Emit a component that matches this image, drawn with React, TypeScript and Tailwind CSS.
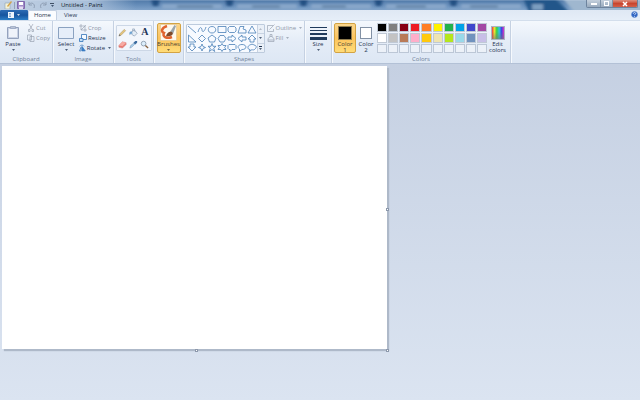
import type { ReactNode } from "react";
import clsx from "clsx";

const palette = [
  { name: "Black", color: "#000000" },
  { name: "Gray", color: "#7f7f7f" },
  { name: "Dark red", color: "#880015" },
  { name: "Red", color: "#ed1c24" },
  { name: "Orange", color: "#ff7f27" },
  { name: "Yellow", color: "#fff200" },
  { name: "Green", color: "#22b14c" },
  { name: "Turquoise", color: "#00a2e8" },
  { name: "Indigo", color: "#3f48cc" },
  { name: "Purple", color: "#a349a4" },
  { name: "White", color: "#ffffff" },
  { name: "Light gray", color: "#c3c3c3" },
  { name: "Brown", color: "#b97a57" },
  { name: "Rose", color: "#ffaec9" },
  { name: "Gold", color: "#ffc90e" },
  { name: "Light yellow", color: "#efe4b0" },
  { name: "Lime", color: "#b5e61d" },
  { name: "Light turquoise", color: "#99d9ea" },
  { name: "Blue gray", color: "#7092be" },
  { name: "Lavender", color: "#c8bfe7" },
];

const shapes = [
  { name: "Line", d: "M1 1 9 8" },
  { name: "Curve", d: "M1 7C3 0 5 3 5 5s2 3 4-3" },
  { name: "Oval", d: "M5 1.5c5 0 5 6.5 0 6.5s-5-6.5 0-6.5z" },
  { name: "Rectangle", d: "M1 1.5h8v6H1z" },
  { name: "Rounded rectangle", d: "M2.5 1.5h5L9 3v3L7.5 7.5h-5L1 6V3z" },
  { name: "Polygon", d: "M3 1.5h4L6 4l3 1v3H1z" },
  { name: "Triangle", d: "M5 1 9 8H1z" },
  { name: "Right triangle", d: "M1.5 1v7H9z" },
  { name: "Diamond", d: "M5 1l3.5 3.5L5 8 1.5 4.5z" },
  { name: "Pentagon", d: "M5 1l4 3-1.5 4h-5L1 4z" },
  { name: "Hexagon", d: "M3 1.5h4L9 4.5 7 8H3L1 4.5z" },
  { name: "Right arrow", d: "M1 3h4V1l4 3.5L5 8V6H1z" },
  { name: "Left arrow", d: "M9 3H5V1L1 4.5 5 8V6h4z" },
  { name: "Up arrow", d: "M3 8V5H1l4-4 4 4H7v3z" },
  { name: "Down arrow", d: "M3 1v3H1l4 4 4-4H7V1z" },
  { name: "Four-point star", d: "M5 1l1 2.5 2.5 1L6 5.5 5 8 4 5.5 1.5 4.5 4 3.5z" },
  { name: "Five-point star", d: "M5 .5l1 2.8h3L6.7 5.2 7.7 8.5 5 6.5 2.3 8.5l1-3.3L1 3.3h3z" },
  { name: "Six-point star", d: "M5 .5l1.2 2H9l-1.3 2L9 6.5H6.2L5 8.5l-1.200-2H1l1.300-2L1 2.500h2.800z" },
  { name: "Rounded callout", d: "M2 1.5h6l1 1v3l-1 1H5L3 8.5v-2H2l-1-1v-3z" },
  { name: "Oval callout", d: "M5 1.5c5.5 0 5 5.3 0 5L2.5 8.5V6C-.5 4 1.5 1.5 5 1.5z" },
  { name: "Cloud callout", d: "M3 2c1-1 3-1 4 0 2 0 3 2 1.5 3.5C7 7.5 5.5 7 5 6.5L2.5 8.5 3 6.5C0 6.5.5 2.5 3 2z" },
];

function Caret({ className }: { className?: string }) {
  return (
    <svg viewBox="0 0 4 2" className={clsx("h-[2px] w-[3px] shrink-0", className)} aria-hidden>
      <path d="M0 0h4L2 2z" fill="currentColor" />
    </svg>
  );
}

function Group({ label, className, children }: { label?: string; className: string; children: ReactNode }) {
  return (
    <section
      aria-label={label}
      className={clsx("flex shrink-0 flex-col border-r border-[#c5d1e2] pt-[2px] shadow-[1px_0_0_#f6f9fd]", className)}
    >
      <div className="flex h-[31px] justify-center">{children}</div>
      {label && <h2 className="mt-[2px] text-center leading-[8px] text-[#6f7f98]">{label}</h2>}
    </section>
  );
}

type BigButtonProps = { icon: ReactNode; label: string; menu?: boolean; active?: boolean; className?: string };

function BigButton({ icon, label, menu, active, className }: BigButtonProps) {
  return (
    <button
      type="button"
      className={clsx(
        "flex h-[30px] shrink-0 flex-col items-center rounded-[2px] border",
        active
          ? "border-[#d3a343] bg-linear-to-b from-[#fbd68c] via-[#fcc35c] to-[#ffdc78] text-[#4a4030]"
          : "border-transparent",
        className,
      )}
    >
      <span className="flex h-[17px] shrink-0 items-center">{icon}</span>
      <span className="w-min text-center leading-[6px]">{label}</span>
      {menu && <Caret className="mt-[2px]" />}
    </button>
  );
}

type SmallButtonProps = { icon: ReactNode; label: string; menu?: boolean; disabled?: boolean };

function SmallButton({ icon, label, menu, disabled }: SmallButtonProps) {
  return (
    <button
      type="button"
      disabled={disabled}
      className={clsx("flex h-[10px] items-center gap-[1px] leading-[10px]", disabled && "text-[#8e98a8]")}
    >
      <svg viewBox="0 0 8 8" className="size-[8px]" fill="none" stroke="currentColor" strokeWidth=".6" aria-hidden>
        {icon}
      </svg>
      {label}
      {menu && <Caret className="ml-[2px]" />}
    </button>
  );
}

function ToolButton({ name, children }: { name: string; children: ReactNode }) {
  return (
    <button type="button" aria-label={name} className="flex h-[12px] items-center justify-center">
      <svg viewBox="0 0 10 10" className="size-[9px]" fill="none" aria-hidden>
        {children}
      </svg>
    </button>
  );
}

function TitleBar() {
  return (
    <header className="relative flex h-[10px] items-center overflow-hidden bg-[#7398c1]">
      {/* Glass frame with the desktop showing through */}
      <svg viewBox="0 0 640 10" preserveAspectRatio="none" className="absolute inset-0 h-full w-full" aria-hidden>
        <defs>
          <linearGradient id="glass" x2="0" y2="1">
            <stop offset="0" stopColor="#4f79a8" />
            <stop offset=".4" stopColor="#6189b6" />
            <stop offset="1" stopColor="#7fa2c9" />
          </linearGradient>
          <linearGradient id="glow">
            <stop offset="0" stopColor="#c3d2e4" />
            <stop offset=".65" stopColor="#a9bfd9" />
            <stop offset="1" stopColor="#a9bfd9" stopOpacity="0" />
          </linearGradient>
          <filter id="soft" x="-5%" y="-50%" width="110%" height="200%">
            <feGaussianBlur stdDeviation="1.5 .8" />
          </filter>
        </defs>
        <path d="M0 0h640v10H0z" fill="url(#glass)" />
        <path d="M0 0h136v10H0z" fill="url(#glow)" />
        <g filter="url(#soft)">
          <path d="M151-1h9l-2 7h-5zM225-1h9l-2 7h-5zM299-1h9l-2 7h-5zM374-1h9l-2 7h-5zM449-1h9l-2 7h-5z" fill="#234f82" />
          <path d="M162 4h60v5h-60zM237 4h60v5h-60zM311 4h60v5h-60zM386 4h60v5h-60zM461 4h60v5h-60z" fill="#87a6c9" />
          <path d="M177 5h36v3h-36zM252 5h28v3h-28zM322 5h24v3h-24zM396 5h30v3h-30zM470 5h28v3h-28z" fill="#6b8bae" />
          <path d="M562-2h80v14h-68z" fill="#9fb7cf" />
          <path d="M523-2h32l14 14h-40z" fill="#24568a" />
          <path d="M532 4h11v6h-11z" fill="#7b9dc0" />
        </g>
        <path d="M0 .5h640" stroke="#dce8f5" strokeOpacity=".2" />
      </svg>

      <div className="relative flex items-center pl-[4px]">
        <svg viewBox="0 0 8 8" className="size-[8px]" aria-hidden>
          <path d="M1 2h5v6H1z" fill="#f5f2d8" stroke="#8ba1b7" strokeWidth=".6" />
          <path d="M3 5 7 0l1 1-4 5z" fill="#d4a348" />
        </svg>
        <span className="ml-[2px] h-[7px] w-px bg-[#93a3b8]" />
        <button type="button" aria-label="Save" className="ml-[2px]">
          <svg viewBox="0 0 8 8" className="size-[8px]" aria-hidden>
            <path d="M.5.5h7v7h-7z" fill="#a18bc8" stroke="#8069ad" />
            <path d="M2 1h4v3H2z" fill="#fff" />
            <path d="M2 5.5h4V8H2z" fill="#e3daf2" />
          </svg>
        </button>
        <button type="button" aria-label="Undo" className="ml-[3px]">
          <svg viewBox="0 0 8 8" className="size-[8px]" fill="none" stroke="#8f9fb5" aria-hidden>
            <path d="M1 1v3h3M1 4c2-4 7-1 5 3" />
          </svg>
        </button>
        <button type="button" aria-label="Redo" className="ml-[3px]">
          <svg viewBox="0 0 8 8" className="size-[8px]" fill="none" stroke="#8f9fb5" aria-hidden>
            <path d="M7 1v3H4M7 4C5 0 0 3 2 7" />
          </svg>
        </button>
        <button type="button" aria-label="Customize Quick Access Toolbar" className="ml-[3px] flex w-[4px] flex-col items-center gap-[1px]">
          <span className="h-px w-full bg-[#3f4f65]" />
          <Caret />
        </button>
      </div>
      <h1 className="relative ml-[7px] leading-[10px] text-[#111c2b]">Untitled - Paint</h1>

      <div className="relative mr-[2px] ml-auto flex h-[8px] self-start overflow-hidden rounded-b-[2px] border border-t-0 border-[#6d839d]">
        <button type="button" aria-label="Minimize" className="flex w-[13px] items-center justify-center bg-linear-to-b from-[#c5d0dd] to-[#98aabd]">
          <span className="h-[2px] w-[6px] bg-white" />
        </button>
        <button type="button" aria-label="Maximize" className="flex w-[13px] items-center justify-center border-x border-[#7f93a9] bg-linear-to-b from-[#c5d0dd] to-[#98aabd]">
          <span className="size-[5px] border border-white" />
        </button>
        <button type="button" aria-label="Close" className="flex w-[24px] items-center justify-center bg-linear-to-b from-[#dc8f7e] via-[#c9452e] to-[#d3604a]">
          <svg viewBox="0 0 6 6" className="size-[6px]" stroke="#fff" strokeWidth="1.5" aria-hidden>
            <path d="M1 1l4 4M5 1 1 5" />
          </svg>
        </button>
      </div>
    </header>
  );
}

function Tabs() {
  return (
    <nav className="flex h-[11px] items-end border-b border-[#d3deec] bg-linear-to-b from-[#dfe8f4] to-[#e6eef8]">
      <button
        type="button"
        aria-label="Paint menu"
        className="flex h-[10px] w-[28px] items-center justify-center gap-[3px] rounded-t-[1px] bg-linear-to-b from-[#2d6cb4] via-[#17559f] to-[#2d7fc8] text-white"
      >
        <svg viewBox="0 0 6 6" className="size-[6px]" aria-hidden>
          <path d="M0 0h6v6H0z" fill="#eef5fc" />
          <path d="M1 1.5h2M1 3h2M1 4.5h2" stroke="#4d83bd" strokeWidth=".7" />
        </svg>
        <Caret />
      </button>
      <button type="button" className="h-[10px] w-[29px] rounded-t-[2px] border border-b-0 border-[#c3d0e2] bg-[#fafcff] leading-[9px]">
        Home
      </button>
      <button type="button" className="h-[10px] w-[27px] leading-[10px]">
        View
      </button>
      <button type="button" aria-label="Help" className="mr-[2px] mb-[2px] ml-auto">
        <svg viewBox="0 0 7 7" className="size-[7px]" aria-hidden>
          <circle cx="3.5" cy="3.5" r="3" fill="#2b62c3" stroke="#6a93d5" strokeWidth=".6" />
          <path d="M2.3 2.7c0-1.6 2.5-1.5 2.3 0-.1.7-1.1.7-1.1 1.5M3.5 5v.7" fill="none" stroke="#fff" strokeWidth=".8" />
        </svg>
      </button>
    </nav>
  );
}

function Ribbon() {
  return (
    <div className="flex h-[43px] border-b border-[#b3c1d6] bg-linear-to-b from-[#f4f8fd] via-[#e4ecf7] to-[#dde7f4]">
      <Group label="Clipboard" className="w-[53px]">
        <BigButton
          menu
          label="Paste"
          className="w-[24px]"
          icon={
            <svg viewBox="0 0 14 15" className="h-[15px] w-[14px]" aria-hidden>
              <path d="M1.5 2.5h11v11h-11z" fill="#c9d2e4" stroke="#94a2bd" />
              <path d="M3 4h8v8H3z" fill="#eff3fa" />
              <path d="M4.5 1.5h5v2h-5z" fill="#b9c3d6" stroke="#94a2bd" strokeWidth=".7" />
            </svg>
          }
        />
        <div className="ml-[2px] flex w-[24px] flex-col">
          <SmallButton disabled label="Cut" icon={<path d="M2 0l3 5M6 0 3 5M1.5 5.5H3v2H1.500zM5 5.500h1.500v2H5z" />} />
          <SmallButton disabled label="Copy" icon={<path d="M.5 1h4v5h-4zM3 2.5h4v5H3z" />} />
        </div>
      </Group>

      <Group label="Image" className="w-[61px]">
        <BigButton
          menu
          label="Select"
          className="w-[22px]"
          icon={
            <svg viewBox="0 0 16 12" className="h-[12px] w-[16px]" aria-hidden>
              <path d="M.5.5h15v11H.5z" fill="#e6eef9" stroke="#8ba2c0" />
            </svg>
          }
        />
        <div className="ml-[2px] flex w-[32px] flex-col">
          <SmallButton disabled label="Crop" icon={<path d="M2 0v6h6M0 2h6v6M2 6l5-5" />} />
          <SmallButton
            label="Resize"
            icon={
              <g stroke="#3172b8" strokeWidth=".8">
                <path d="M2.5.5h5v5h-5z" fill="#f4faff" />
                <path d="M.5 4.5v3H4v-3z" fill="#c5def5" />
              </g>
            }
          />
          <SmallButton
            menu
            label="Rotate"
            icon={
              <g stroke="#3172b8" strokeWidth=".8">
                <path d="M3.5 2v5.5h4z" fill="#3d84cb" />
                <path d="M2.5 3v4.5h-2z" fill="#e3effb" />
                <path d="M1 2c1-2 4-2 5 0" />
              </g>
            }
          />
        </div>
      </Group>

      <Group label="Tools" className="w-[40px]">
        <div className="mt-[2px] grid h-[26px] w-[36px] grid-cols-3 content-between rounded-[1px] border border-[#ccd7e6] bg-[#f2f6fc]">
          <ToolButton name="Pencil">
            <path d="M1 9l1-2.5 5-5L8.5 3l-5 5z" fill="#e6c67c" stroke="#9c8a63" strokeWidth=".5" />
            <path d="M1 9l.7-2L3 8.300z" fill="#5c6575" />
          </ToolButton>
          <ToolButton name="Fill with color">
            <path d="M3 4l3-2 3 4-3 3-3-2z" fill="#e4edf6" stroke="#7d91aa" strokeWidth=".7" />
            <path d="M4 4V1h2v3" stroke="#7d91aa" strokeWidth=".6" />
            <path d="M3 4C0 4 0 6 1 8c1-2 1-2 3-2z" fill="#6fa3d2" />
          </ToolButton>
          <button type="button" aria-label="Text" className="h-[12px] font-['Liberation_Serif',serif] text-[10px] leading-[12px] font-bold text-[#1d3558]">
            A
          </button>
          <ToolButton name="Eraser">
            <path d="M1 6l4-4 4 1v2L5 9 1 8z" fill="#e8786f" stroke="#cf7e7a" strokeWidth=".5" />
            <path d="M1 6l4-4 4 1-4 4z" fill="#f7aaa2" />
          </ToolButton>
          <ToolButton name="Color picker">
            <path d="M1 9l1-3 4-3 1 1-4 4z" fill="#a9d1ee" stroke="#7593b3" strokeWidth=".6" />
            <path d="M5 3l2 2 2-2V1H7z" fill="#3a6a9e" />
          </ToolButton>
          <ToolButton name="Magnifier">
            <circle cx="4" cy="4" r="2.6" fill="#dceefc" stroke="#8c9dae" />
            <path d="M6 6l3 3" stroke="#86613e" strokeWidth="1.5" />
          </ToolButton>
        </div>
      </Group>

      <Group className="w-[30px]">
        <BigButton
          active
          menu
          label="Brushes"
          className="w-[24px]"
          icon={
            <svg viewBox="0 0 17 17" className="size-[17px]" aria-hidden>
              <path d="M.5.5h16v16H.5z" fill="#fdf8ee" stroke="#e0c187" strokeWidth=".6" />
              <path d="M7 2C1 4 1 8 4 9c-2 4 3 6 8 4" fill="none" stroke="#e0642f" strokeWidth="2.5" />
              <path d="M10 8l4.500-7 1.500 1-3 8z" fill="#9aa5ac" />
              <path d="M6 12c1-3 3-5 6-4 2 2 0 5-6 4z" fill="#7d492b" />
            </svg>
          }
        />
      </Group>

      <Group label="Shapes" className="w-[121px]">
        <div className="mt-[1px] flex h-[29px] w-[79px] rounded-[1px] border border-[#bdcbdd] bg-[#f7faff]">
          <div className="grid flex-1 grid-cols-7">
            {shapes.map((s) => (
              <button key={s.name} type="button" aria-label={s.name} className="flex h-[9px] justify-center">
                <svg viewBox="0 0 10 9" className="h-[9px] w-[10px]" fill="none" stroke="#4a80b8" strokeWidth=".8" aria-hidden>
                  <path d={s.d} />
                </svg>
              </button>
            ))}
          </div>
          <div className="flex w-[7px] flex-col divide-y divide-[#c8d3e2] border-l border-[#c8d3e2] bg-[#eaf0f8]">
            <button type="button" aria-label="Scroll shapes up" className="flex flex-1 items-center justify-center text-[#a3abb8]">
              <Caret className="rotate-180" />
            </button>
            <button type="button" aria-label="Scroll shapes down" className="flex flex-1 items-center justify-center">
              <Caret />
            </button>
            <button type="button" aria-label="All shapes" className="flex flex-1 flex-col items-center justify-center gap-[1px]">
              <span className="h-px w-[3px] bg-current" />
              <Caret />
            </button>
          </div>
        </div>
        <div className="ml-[2px] flex w-[36px] flex-col">
          <SmallButton disabled menu label="Outline" icon={<path d="M6 1.5H.5v6h6V5M2.5 5.5l5-5" />} />
          <SmallButton disabled menu label="Fill" icon={<path d="M1 4.5 4 2l3 2.5v3H1zM3 3V.5h2V3M1 6h6" />} />
        </div>
      </Group>

      <Group className="w-[27px]">
        <BigButton
          menu
          label="Size"
          className="w-[22px]"
          icon={
            <svg viewBox="0 0 17 14" className="h-[14px] w-[17px]" fill="#1f3a5c" aria-hidden>
              <path d="M0 1h17v1H0zM0 4h17v1H0zM0 7h17v2H0zM0 11h17v3H0z" />
            </svg>
          }
        />
      </Group>

      <Group label="Colors" className="w-[179px]">
        <BigButton
          active
          label="Color 1"
          className="w-[22px]"
          icon={<span className="size-[14px] border border-[#8d7a4d] bg-black" />}
        />
        <BigButton
          label="Color 2"
          className="w-[20px]"
          icon={<span className="size-[12px] border border-[#8291a5] bg-white" />}
        />
        <div className="ml-[1px] grid h-[30px] w-[110px] shrink-0 grid-cols-10 gap-px">
          {palette.map((p) => (
            <button
              key={p.name}
              type="button"
              aria-label={p.name}
              className="border border-[#c0c9d5]"
              style={{ backgroundColor: p.color }}
            />
          ))}
          {Array.from({ length: 10 }, (_, i) => (
            <button key={i} type="button" aria-label={`Custom color ${i + 1}`} className="border border-[#bcc7d6] bg-[#ecf1f8]" />
          ))}
        </div>
        <BigButton
          label="Edit colors"
          className="w-[21px]"
          icon={
            <span className="size-[14px] border border-[#aab4c4] bg-[linear-gradient(to_bottom,transparent_40%,#77777799),linear-gradient(to_right,#ee3340,#f0e232,#35cf45,#30c8e4,#4042e0,#e335c9)]" />
          }
        />
      </Group>
    </div>
  );
}

export default function App() {
  return (
    <div className="flex min-h-screen flex-col bg-[#d9e3f0] font-['Open_Sans',sans-serif] text-[6px] text-[#1f3350]">
      <TitleBar />
      <Tabs />
      <Ribbon />
      <main className="flex-1 bg-linear-to-b from-[#c5d0e2] to-[#dbe4f1] pt-[2px] pl-[2px]">
        <div className="relative h-[283px] w-[385px] bg-white shadow-[2px_2px_1px_#aeb9c9]">
          <span className="absolute top-1/2 -right-[2px] size-[3px] border border-[#8d99ac] bg-white" />
          <span className="absolute -bottom-[3px] left-1/2 size-[3px] border border-[#8d99ac] bg-white" />
          <span className="absolute -right-[2px] -bottom-[3px] size-[3px] border border-[#8d99ac] bg-white" />
        </div>
      </main>
    </div>
  );
}
